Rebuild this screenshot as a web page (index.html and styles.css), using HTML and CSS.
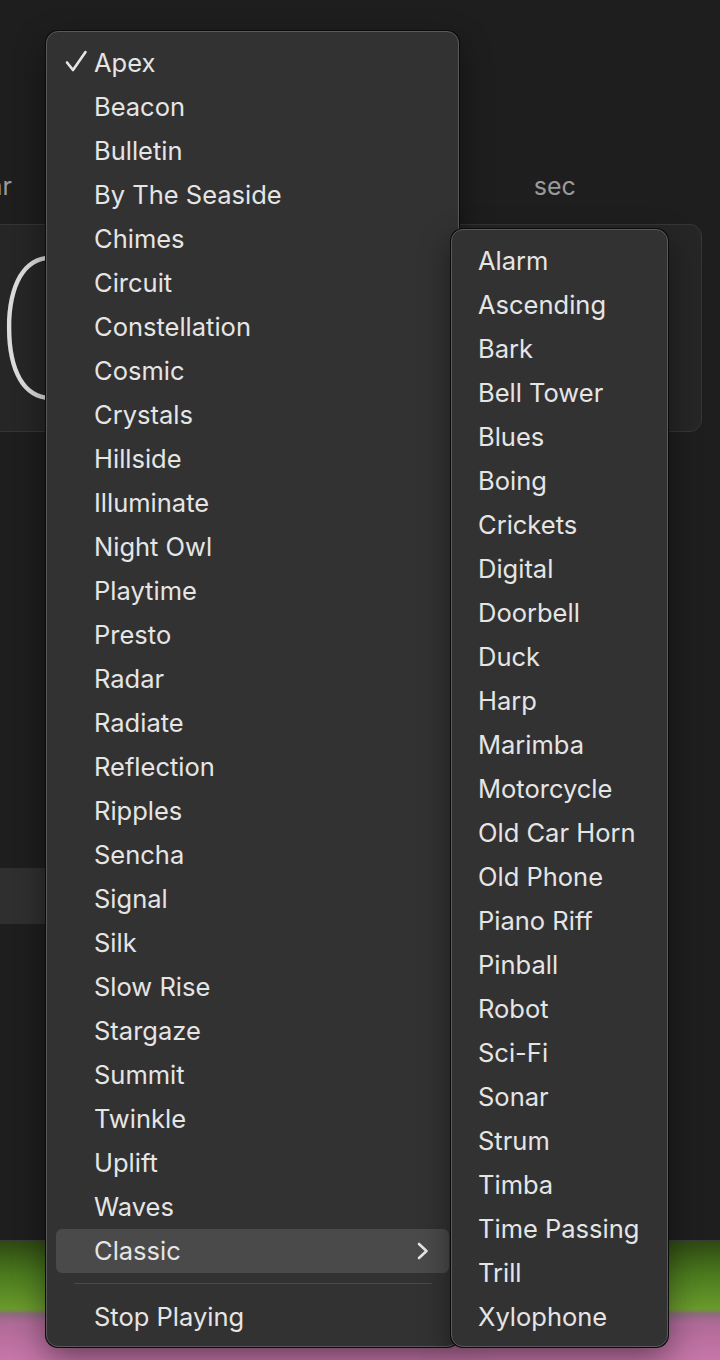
FILE: index.html
```html
<!DOCTYPE html>
<html lang="en">
<head>
  <meta charset="UTF-8" />
  <title>Timer sounds</title>
  <link rel="stylesheet" href="styles.css">
</head>
<body>

<div class="window">
  <div class="labels">
    <span>hr</span>
    <span>min</span>
    <span>sec</span>
  </div>
  <div class="clock">
    <span class="digits">00:00</span>
  </div>
  <div class="bar"></div>
</div>
<div class="wallpaper"></div>

<ul class="menu main">
  <li class="item">
    <svg class="check" width="24" height="24" viewBox="0 0 24 24"><polyline points="2,12.5 8,20 20.5,2" /></svg>
    Apex
  </li>
  <li class="item">Beacon</li>
  <li class="item">Bulletin</li>
  <li class="item">By The Seaside</li>
  <li class="item">Chimes</li>
  <li class="item">Circuit</li>
  <li class="item">Constellation</li>
  <li class="item">Cosmic</li>
  <li class="item">Crystals</li>
  <li class="item">Hillside</li>
  <li class="item">Illuminate</li>
  <li class="item">Night Owl</li>
  <li class="item">Playtime</li>
  <li class="item">Presto</li>
  <li class="item">Radar</li>
  <li class="item">Radiate</li>
  <li class="item">Reflection</li>
  <li class="item">Ripples</li>
  <li class="item">Sencha</li>
  <li class="item">Signal</li>
  <li class="item">Silk</li>
  <li class="item">Slow Rise</li>
  <li class="item">Stargaze</li>
  <li class="item">Summit</li>
  <li class="item">Twinkle</li>
  <li class="item">Uplift</li>
  <li class="item">Waves</li>
  <li class="item active">
    Classic
    <svg class="chevron" width="12" height="18" viewBox="0 0 12 18"><polyline points="2,2 9.5,9 2,16" /></svg>
  </li>
  <li class="sep"></li>
  <li class="item">Stop Playing</li>
</ul>

<ul class="menu sub">
  <li class="item">Alarm</li>
  <li class="item">Ascending</li>
  <li class="item">Bark</li>
  <li class="item">Bell Tower</li>
  <li class="item">Blues</li>
  <li class="item">Boing</li>
  <li class="item">Crickets</li>
  <li class="item">Digital</li>
  <li class="item">Doorbell</li>
  <li class="item">Duck</li>
  <li class="item">Harp</li>
  <li class="item">Marimba</li>
  <li class="item">Motorcycle</li>
  <li class="item">Old Car Horn</li>
  <li class="item">Old Phone</li>
  <li class="item">Piano Riff</li>
  <li class="item">Pinball</li>
  <li class="item">Robot</li>
  <li class="item">Sci-Fi</li>
  <li class="item">Sonar</li>
  <li class="item">Strum</li>
  <li class="item">Timba</li>
  <li class="item">Time Passing</li>
  <li class="item">Trill</li>
  <li class="item">Xylophone</li>
</ul>

</body>
</html>
```

FILE: styles.css
```css
body {
  font-family: Inter, "Noto Sans", sans-serif;
  background: #1e1e1e;
  color: #e5e5e5;
  margin: 0;
  width: 720px;
  height: 1360px;
  overflow: hidden;
  position: relative;
}

/* timer window behind the menu */
.window {
  height: 1240px;
  border-bottom: 1px solid #3c3c3c;
  overflow: hidden;
}
.labels {
  display: grid;
  grid-template-columns: repeat(3, 277.5px);
  margin-left: -139px;
  padding-top: 171px;
  font-size: 25px;
  line-height: 30px;
  color: #9a9a9a;
  text-align: center;
}
.clock {
  margin: 23px 0 0 -20px;
  width: 722px;
  height: 208px;
  box-sizing: border-box;
  border: 1px solid #363636;
  border-radius: 12px;
  background: #262626;
  overflow: hidden;
  display: flex;
  align-items: center;
  padding-left: 12px;
}
.digits {
  font-size: 193px;
  font-weight: 100;
  line-height: 1;
  color: #dcdcdc;
  white-space: nowrap;
}
.bar {
  margin-top: 436px;
  width: 420px;
  height: 56px;
  background: #2f2f2f;
}
.wallpaper {
  height: 119px;
  background: linear-gradient(to bottom, #2e4912 0, #4b7a1e 34px, #6a9a2c 68px, #8f6a80 73px, #b06a98 82px, #c676aa 119px);
}

/* menus */
.menu {
  position: absolute;
  list-style: none;
  margin: 0;
  padding: 9px 0 7px;
  box-sizing: border-box;
  background: #323232;
  border: 1px solid #5a5a5a;
  border-radius: 12px;
  box-shadow: 0 0 0 1px #0b0b0b, 0 12px 32px rgba(0, 0, 0, 0.45);
}
.main {
  left: 46px;
  top: 31px;
  width: 413px;
}
.sub {
  left: 451px;
  top: 229px;
  width: 217px;
}
.item {
  position: relative;
  height: 44px;
  box-sizing: border-box;
  padding-bottom: 2px;
  display: flex;
  align-items: center;
  padding-left: 47px;
  font-size: 25.5px;
  white-space: nowrap;
}
.sub .item {
  padding-left: 26px;
}
.item.active {
  margin: 0 9px;
  padding-left: 38px;
  border-radius: 6px;
  background: #4a4a4a;
}
.check {
  position: absolute;
  left: 18px;
  top: 9px;
}
.check polyline,
.chevron polyline {
  fill: none;
  stroke: #e5e5e5;
  stroke-width: 2.6;
  stroke-linecap: round;
  stroke-linejoin: round;
}
.chevron {
  position: absolute;
  right: 20px;
  top: 13px;
}
.sep {
  height: 1px;
  background: #4b4b4b;
  margin: 10px 26px 11px 27px;
}
```
